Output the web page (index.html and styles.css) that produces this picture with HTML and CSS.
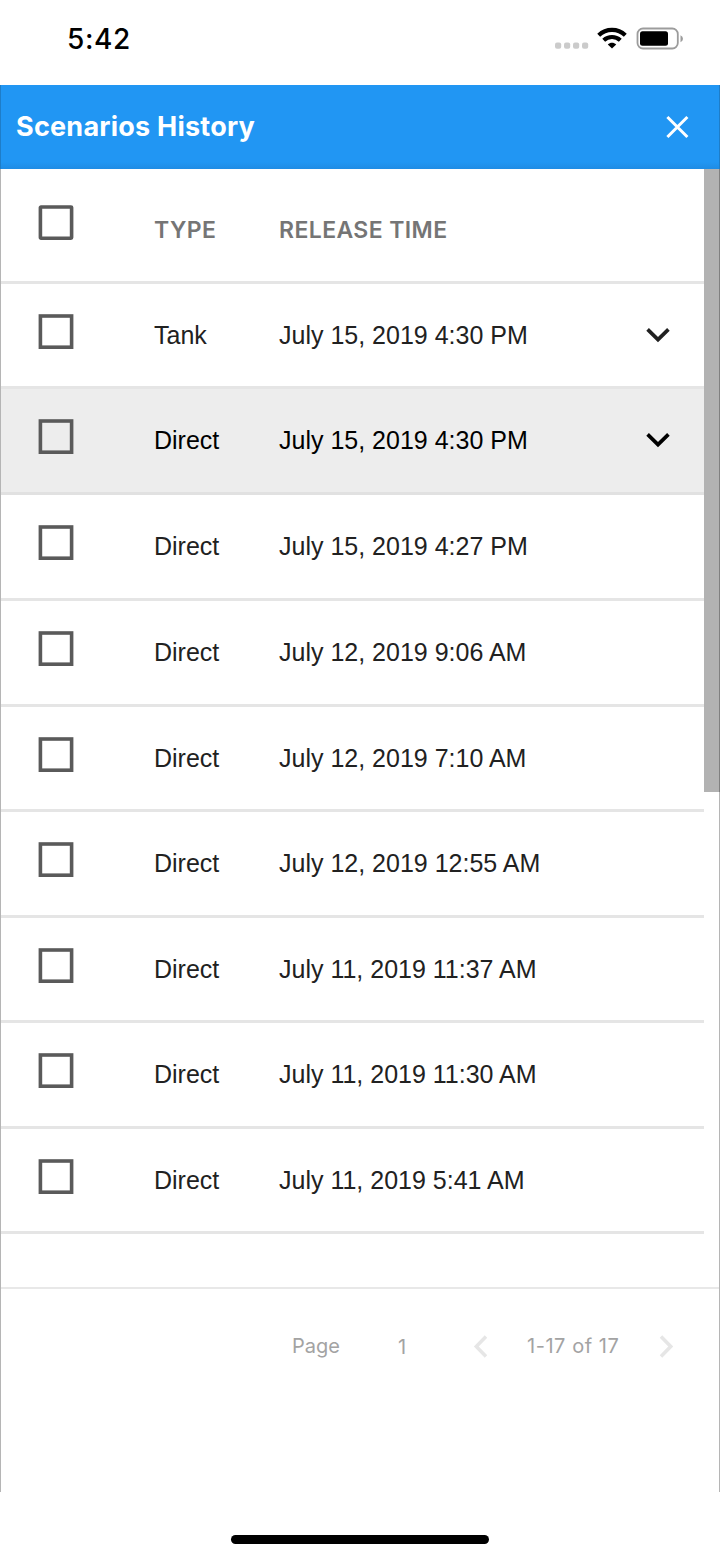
FILE: index.html
```html
<!DOCTYPE html>
<html lang="en">
<head>
<meta charset="utf-8">
<title>Scenarios History</title>
<link rel="stylesheet" href="styles.css">
</head>
<body>
<svg width="0" height="0" class="defs">
  <symbol id="box" viewBox="0 0 36 36"><rect x="2.4" y="2" width="31.2" height="31.2" fill="none" stroke="#5a5a5a" stroke-width="3.6"/></symbol>
  <symbol id="chev" viewBox="0 0 24 16"><path d="M1.6 2.4 12 12.6 22.4 2.4" fill="none" stroke="currentColor" stroke-width="3.7"/></symbol>
</svg>
<header class="status">
  <span class="clock">5:42</span>
  <svg class="signal" width="34" height="8" viewBox="0 0 34 8" fill="#cbcbcb"><rect x="0" y="1.500" width="6.2" height="6.2" rx="2"/><rect x="9" y="1.500" width="6.2" height="6.2" rx="2"/><rect x="18" y="1.500" width="6.2" height="6.2" rx="2"/><rect x="27" y="1.500" width="6.2" height="6.2" rx="2"/></svg>
  <svg class="wifi" width="30" height="22" viewBox="0 0 30 22" fill="none" stroke="#000" stroke-width="4.200"><path d="M1.7 8.2C9.2 1.1 20.800 1.100 28.300 8.200"/><path d="M6.700 13.200C11.400 8.900 18.600 8.900 23.300 13.200"/><path d="M15 21.500 10.800 17.500C13.200 15.300 16.800 15.300 19.200 17.500Z" fill="#000" stroke="none"/></svg>
  <svg class="battery" width="48" height="24" viewBox="0 0 48 24"><rect x="1.500" y="1.500" width="40.300" height="20" rx="5.500" fill="none" stroke="#9c9c9c" stroke-width="1.800"/><rect x="4" y="4.300" width="28" height="14.500" rx="2.500"/><path d="M44.500 8.300Q47 9.500 47 11.700T44.500 15.200Z" fill="#9c9c9c"/></svg>
</header>
<main class="panel">
  <div class="titlebar">
    <h1 class="title">Scenarios History</h1>
    <svg class="close" width="24" height="24" viewBox="0 0 24 24" fill="none" stroke="#fff" stroke-width="3"><path d="M2.400 2 22.400 22M22.400 2 2.400 22"/></svg>
  </div>
  <div class="list">
    <div class="rows">
      <div class="row head"><svg class="check" viewBox="0 0 36 36"><rect x="2.400" y="2" width="31.200" height="31.200" rx="0.600" fill="none" stroke="#5a5a5a" stroke-width="3.600" stroke-linejoin="round"/></svg><span class="type">TYPE</span><span class="time">RELEASE TIME</span></div>
      <div class="row"><svg class="check"><use href="#box"/></svg><span class="type">Tank</span><span class="time">July 15, 2019 4:30 PM</span><svg class="chevron"><use href="#chev"/></svg></div>
      <div class="row active"><svg class="check"><use href="#box"/></svg><span class="type">Direct</span><span class="time">July 15, 2019 4:30 PM</span><svg class="chevron"><use href="#chev"/></svg></div>
      <div class="row"><svg class="check"><use href="#box"/></svg><span class="type">Direct</span><span class="time">July 15, 2019 4:27 PM</span></div>
      <div class="row"><svg class="check"><use href="#box"/></svg><span class="type">Direct</span><span class="time">July 12, 2019 9:06 AM</span></div>
      <div class="row"><svg class="check"><use href="#box"/></svg><span class="type">Direct</span><span class="time">July 12, 2019 7:10 AM</span></div>
      <div class="row"><svg class="check"><use href="#box"/></svg><span class="type">Direct</span><span class="time">July 12, 2019 12:55 AM</span></div>
      <div class="row"><svg class="check"><use href="#box"/></svg><span class="type">Direct</span><span class="time">July 11, 2019 11:37 AM</span></div>
      <div class="row"><svg class="check"><use href="#box"/></svg><span class="type">Direct</span><span class="time">July 11, 2019 11:30 AM</span></div>
      <div class="row"><svg class="check"><use href="#box"/></svg><span class="type">Direct</span><span class="time">July 11, 2019 5:41 AM</span></div>
    </div>
    <div class="scroll"><div class="thumb"></div></div>
  </div>
  <footer class="pager">
    <span class="label">Page</span>
    <span class="number">1</span>
    <svg class="prev" width="14" height="24" viewBox="0 0 14 24" fill="none" stroke="#e6e6e6" stroke-width="3.500"><path d="M13 1.500 3.300 11.500 13 21.500"/></svg>
    <span class="range">1-17 of 17</span>
    <svg class="next" width="14" height="24" viewBox="0 0 14 24" fill="none" stroke="#e6e6e6" stroke-width="3.500"><path d="M2 1.500 11.700 11.500 2 21.500"/></svg>
  </footer>
</main>
<div class="home"></div>
</body>
</html>
```
FILE: styles.css
```css
* { box-sizing: border-box; }
body { margin: 0; width: 720px; height: 1558px; background: #fff; font-family: Inter, sans-serif; overflow: hidden; display: flex; flex-direction: column; }
svg { display: block; flex: none; }
.defs { display: none; }
.status { height: 85px; padding-left: 67px; display: flex; align-items: flex-start; flex: none; }
.clock { width: 488px; margin-top: 22px; font-size: 28px; line-height: 34px; font-weight: 550; letter-spacing: 0.6px; color: #000; }
.signal { margin-top: 41px; }
.wifi { margin: 27px 0 0 8px; }
.battery { margin: 27px 0 0 9px; }
.panel { height: 1407px; flex: none; display: flex; flex-direction: column; border: solid #b5b5b5; border-width: 0 1px; }
.titlebar { height: 84px; margin: 0 -1px; padding: 0 30px 0 15px; background: linear-gradient(#2196f3 0 77px, #1f8ce4); border: solid #1e7dc8; border-width: 0 1px; display: flex; align-items: center; justify-content: space-between; flex: none; }
.title { margin: 0; font-size: 27px; line-height: 36px; font-weight: 700; letter-spacing: 0.23px; color: #fff; }
.list { height: 1118px; display: flex; flex: none; }
.rows { width: 703px; }
.row { height: 106px; padding-left: 37px; border-bottom: 3px solid #e5e5e5; display: grid; grid-template-columns: 116px 125px 1fr 58px; font-family: "Liberation Sans", Arial, sans-serif; font-size: 25px; line-height: 30px; color: #212121; align-items: start; }
.row:nth-child(2), .row:nth-child(6), .row:nth-child(8), .row:nth-child(10) { height: 105px; }
.check { width: 36px; height: 36px; margin-top: 30px; }
.type, .time { margin-top: 36px; white-space: nowrap; }
.chevron { width: 24px; height: 16px; margin-top: 43px; }
.active { background: #ededed; color: #000; border-bottom-color: #e1e1e1; }
.row.head { height: 115px; font-family: Inter, sans-serif; font-size: 23px; font-weight: 600; color: #757575; letter-spacing: 0.4px; }
.head .check { margin-top: 36px; }
.head .type, .head .time { margin-top: 46px; }
.scroll { width: 16px; margin-right: -1px; }
.thumb { height: 623px; background: #b2b2b2; border-right: 1px solid #808080; }
.pager { flex: 1; border-top: 2px solid #e8e8e8; display: flex; align-items: flex-start; padding: 44px 0 0 291px; font-size: 20px; line-height: 26px; color: #a3a3a3; }
.label { width: 106px; }
.number { width: 75px; margin-top: 1px; }
.prev { margin-top: 2px; }
.range { width: 172px; padding-left: 40px; white-space: nowrap; letter-spacing: 0.55px; }
.next { margin-top: 2px; }
.home { width: 258px; height: 9px; margin: 43px 0 0 231px; border-radius: 5px; background: #000; flex: none; }
```
